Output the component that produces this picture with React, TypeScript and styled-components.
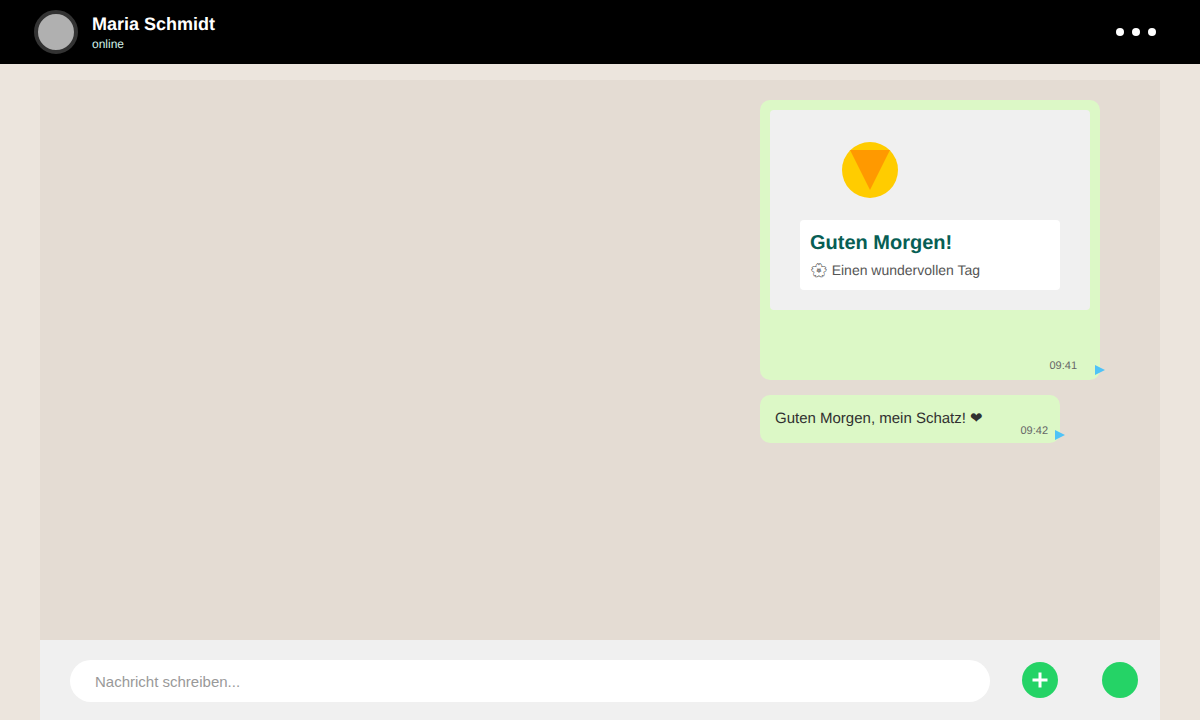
import styled, { createGlobalStyle } from 'styled-components';

const GlobalStyle = createGlobalStyle`
    html,
    body {
        margin: 0;
        padding: 0;
        background-color: #ece5dd;
        font-family: 'Liberation Sans', Arial, sans-serif;
        text-rendering: geometricPrecision;
    }
`;

const App = () => {
    return (
        <Page>
            <GlobalStyle />
            <Header>
                <Contact>
                    <Avatar />
                    <ContactText>
                        <Name>Maria Schmidt</Name>
                        <Status>online</Status>
                    </ContactText>
                </Contact>
                <Menu>
                    <Dot />
                    <Dot />
                    <Dot />
                </Menu>
            </Header>
            <Main>
                <ChatArea>
                    <CardBubble>
                        <Preview>
                            <Logo>
                                <svg width='56' height='56' viewBox='0 0 56 56'>
                                    <circle cx='28' cy='28' r='28' fill='#ffcc00' />
                                    <polygon points='8,8 48,8 28,48' fill='#ff9900' />
                                </svg>
                            </Logo>
                            <GreetingCard>
                                <GreetingTitle>Guten Morgen!</GreetingTitle>
                                <GreetingText>{'\u{1F338}\uFE0E'} Einen wundervollen Tag</GreetingText>
                            </GreetingCard>
                        </Preview>
                        <Time $right={23} $bottom={7}>09:41</Time>
                        <Tick $bottom={5} />
                    </CardBubble>
                    <TextBubble>
                        Guten Morgen, mein Schatz! {'\u2764\uFE0E'}
                        <Time $right={12} $bottom={5}>09:42</Time>
                        <Tick $bottom={3} />
                    </TextBubble>
                </ChatArea>
                <InputBar>
                    <MessageInput placeholder='Nachricht schreiben...' readOnly />
                    <AddButton>
                        <svg width='18' height='18' viewBox='0 0 18 18'>
                            <path d='M9 1.5v15M1.5 9h15' stroke='#fff' strokeWidth='3' />
                        </svg>
                    </AddButton>
                    <SendButton />
                </InputBar>
            </Main>
        </Page>
    );
};

export default App;

const Page = styled.div`
    width: 1200px;
    height: 720px;
    display: flex;
    flex-direction: column;
    overflow: hidden;
`;

const Header = styled.header`
    height: 64px;
    flex-shrink: 0;
    box-sizing: border-box;
    padding: 0 44px 0 34px;
    display: flex;
    align-items: center;
    justify-content: space-between;
    background-color: #000;
`;

const Contact = styled.div`
    display: flex;
    align-items: center;
    gap: 14px;
`;

const Avatar = styled.div`
    width: 44px;
    height: 44px;
    box-sizing: border-box;
    border: 4px solid #333;
    border-radius: 50%;
    background-color: #b0b0b0;
`;

const ContactText = styled.div`
    display: flex;
    flex-direction: column;
    gap: 2px;
`;

const Name = styled.div`
    font-size: 18px;
    line-height: 21px;
    font-weight: 700;
    color: #fff;
`;

const Status = styled.div`
    font-size: 12px;
    line-height: 14px;
    color: #d0eee6;
`;

const Menu = styled.div`
    display: flex;
    gap: 8px;
`;

const Dot = styled.span`
    width: 8px;
    height: 8px;
    border-radius: 50%;
    background-color: #fff;
`;

const Main = styled.main`
    flex: 1;
    margin: 16px 40px 0;
    display: flex;
    flex-direction: column;
`;

const ChatArea = styled.section`
    flex: 1;
    box-sizing: border-box;
    padding: 20px 60px 0 720px;
    display: flex;
    flex-direction: column;
    align-items: flex-start;
    gap: 15px;
    background-color: #e4dcd3;
`;

const Bubble = styled.div`
    position: relative;
    box-sizing: border-box;
    border-radius: 10px;
    background-color: #dcf8c6;
`;

const CardBubble = styled(Bubble)`
    width: 340px;
    height: 280px;
    padding: 10px;
`;

const TextBubble = styled(Bubble)`
    width: 300px;
    height: 48px;
    padding: 15px 15px 0;
    font-size: 15px;
    line-height: 17px;
    color: #303030;
`;

const Preview = styled.div`
    height: 200px;
    box-sizing: border-box;
    padding: 32px 30px 0;
    border-radius: 4px;
    background-color: #f0f0f0;
`;

const Logo = styled.div`
    height: 56px;
    margin: 0 0 22px 42px;

    svg {
        display: block;
    }
`;

const GreetingCard = styled.div`
    height: 70px;
    box-sizing: border-box;
    padding: 12px 10px 0;
    border-radius: 4px;
    background-color: #fff;
`;

const GreetingTitle = styled.div`
    font-size: 20px;
    line-height: 23px;
    font-weight: 700;
    color: #075e54;
`;

const GreetingText = styled.div`
    margin-top: 7px;
    font-size: 14px;
    line-height: 16px;
    color: #555;
`;

const Time = styled.span<{ $right: number; $bottom: number }>`
    position: absolute;
    right: ${(props) => props.$right}px;
    bottom: ${(props) => props.$bottom}px;
    font-size: 11px;
    line-height: 13px;
    color: #666;
`;

const Tick = styled.span<{ $bottom: number }>`
    position: absolute;
    right: -5px;
    bottom: ${(props) => props.$bottom}px;
    width: 0;
    height: 0;
    border-style: solid;
    border-width: 5px 0 5px 10px;
    border-color: transparent transparent transparent #4fc3f7;
`;

const InputBar = styled.div`
    height: 80px;
    flex-shrink: 0;
    box-sizing: border-box;
    padding: 0 22px 0 30px;
    display: flex;
    align-items: center;
    background-color: #f0f0f0;
`;

const MessageInput = styled.input`
    width: 920px;
    height: 42px;
    margin-top: 2px;
    box-sizing: border-box;
    padding: 0 25px;
    border: none;
    border-radius: 21px;
    outline: none;
    background-color: #fff;
    font-family: inherit;
    font-size: 15px;
    color: #303030;

    &::placeholder {
        color: #999;
        opacity: 1;
    }
`;

const RoundButton = styled.div`
    width: 36px;
    height: 36px;
    display: flex;
    align-items: center;
    justify-content: center;
    border-radius: 50%;
    background-color: #25d366;
`;

const AddButton = styled(RoundButton)`
    margin-left: 32px;
`;

const SendButton = styled(RoundButton)`
    margin-left: 44px;
`;
